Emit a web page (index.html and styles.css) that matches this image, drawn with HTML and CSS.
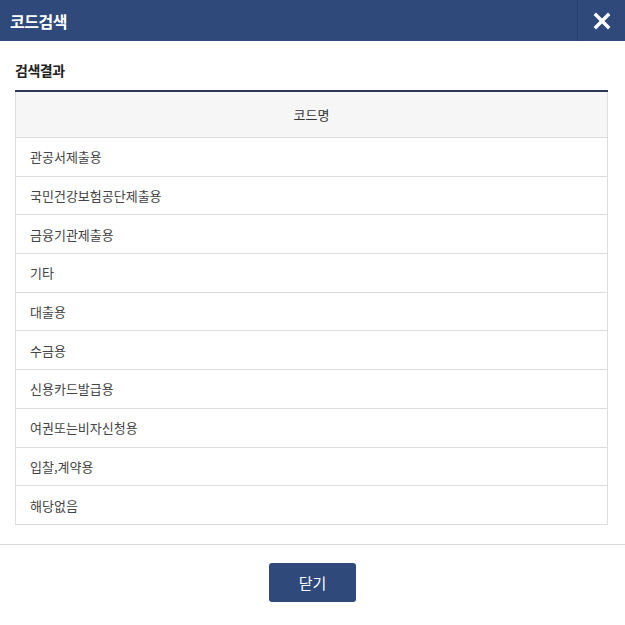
FILE: index.html
```html
<!DOCTYPE html>
<html lang="ko">
<head>
    <meta charset="UTF-8">
    <meta name="viewport" content="width=device-width, initial-scale=1.0">
    <title>코드검색</title>
    <link rel="stylesheet" href="styles.css">
</head>
<body>
    <div class="popup">
        <div class="popup-head">
            <h1>코드검색</h1>
            <button class="btn-close" type="button" aria-label="닫기">
                <svg width="18" height="18" viewBox="0 0 18 18"><path d="M3 3L15 15M15 3L3 15" stroke="#fff" stroke-width="3.4" stroke-linecap="square"/></svg>
            </button>
        </div>
        <div class="popup-body">
            <h2>검색결과</h2>
            <table class="list">
                <thead>
                    <tr><th>코드명</th></tr>
                </thead>
                <tbody>
                    <tr><td>관공서제출용</td></tr>
                    <tr><td>국민건강보험공단제출용</td></tr>
                    <tr><td>금융기관제출용</td></tr>
                    <tr><td>기타</td></tr>
                    <tr><td>대출용</td></tr>
                    <tr><td>수금용</td></tr>
                    <tr><td>신용카드발급용</td></tr>
                    <tr><td>여권또는비자신청용</td></tr>
                    <tr><td>입찰,계약용</td></tr>
                    <tr><td>해당없음</td></tr>
                </tbody>
            </table>
        </div>
        <div class="popup-foot">
            <button class="btn-primary" type="button">닫기</button>
        </div>
    </div>
</body>
</html>
```

FILE: styles.css
```css
body { margin: 0; padding: 0; font-family: "Noto Sans CJK KR", "Noto Sans", sans-serif; color: #333; background: #fff; }
.popup { width: 625px; }
.popup-head { height: 41px; background: #2f4a7a; display: flex; align-items: center; justify-content: space-between; }
.popup-head h1 { margin: 0 0 0 10px; font-size: 16px; font-weight: 700; color: #fff; letter-spacing: -0.5px; }
.btn-close { width: 48px; height: 41px; border: none; border-left: 1px solid #27406b; background: transparent; display: flex; align-items: center; justify-content: center; padding: 0; cursor: pointer; }
.popup-body { padding: 19px 17px 19px 15px; border-bottom: 1px solid #d9d9d9; }
.popup-body h2 { margin: 0 0 10px; font-size: 14px; font-weight: 700; color: #222; line-height: 20px; letter-spacing: -0.5px; }
.list { width: 100%; border-collapse: collapse; border-top: 2px solid #2b3a55; font-size: 13px; }
.list th { height: 43px; background: #f6f6f6; font-weight: 400; color: #333; border: 1px solid #dedede; border-top: none; }
.list td { height: 37.7px; padding: 0 0 0 14px; border: 1px solid #dedede; color: #444; }
.popup-foot { display: flex; justify-content: center; padding: 18px 0 23px; }
.btn-primary { width: 87px; height: 39px; border: none; border-radius: 3px; background: #2f4a7a; color: #fff; font-family: inherit; font-size: 15px; cursor: pointer; }
```
